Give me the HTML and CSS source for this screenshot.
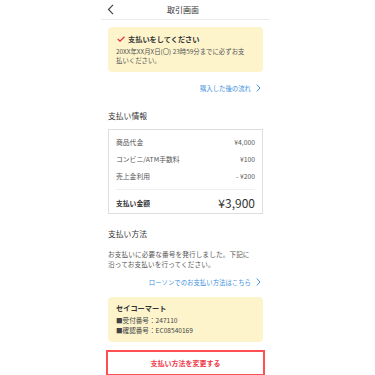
FILE: index.html
```html
<!DOCTYPE html>
<html lang="ja">
<head>
<meta charset="UTF-8">
<title>取引画面</title>
<link rel="stylesheet" href="styles.css">
</head>
<body>
<div class="screen">
	<!-- ヘッダー -->
	<div class="header">
		<span class="back">
			<svg width="7" height="11" viewBox="0 0 7 11"><path d="M6 0.8 L1.5 5.5 L6 10.2" fill="none" stroke="#444" stroke-width="1.2"/></svg>
		</span>
		<span class="title">取引画面</span>
	</div>

	<div class="content">
		<div class="notice">
			<div class="notice-title">
				<svg width="8" height="6" viewBox="0 0 8 6"><path d="M0.7 3 L3 5.2 L7.4 0.7" fill="none" stroke="#e8344a" stroke-width="1.3"/></svg>
				支払いをしてください
			</div>
			<p class="notice-text">20XX年XX月X日(〇) 23時59分までに必ずお支払いください。</p>
		</div>

		<a href="#" class="more first">購入した後の流れ
			<svg width="5" height="8" viewBox="0 0 5 8"><path d="M0.8 0.6 L4 4 L0.8 7.4" fill="none" stroke="#3d8fdc" stroke-width="1"/></svg>
		</a>

		<h2 class="heading">支払い情報</h2>
		<div class="bill">
			<div class="row"><span>商品代金</span><span>¥4,000</span></div>
			<div class="row"><span>コンビニ/ATM手数料</span><span>¥100</span></div>
			<div class="row"><span>売上金利用</span><span>- ¥200</span></div>
			<div class="row total"><span>支払い金額</span><span class="sum">¥3,900</span></div>
		</div>

		<h2 class="heading method">支払い方法</h2>
		<p class="desc">お支払いに必要な番号を発行しました。下記に沿ってお支払いを行ってください。</p>

		<a href="#" class="more">ローソンでのお支払い方法はこちら
			<svg width="5" height="8" viewBox="0 0 5 8"><path d="M0.8 0.6 L4 4 L0.8 7.4" fill="none" stroke="#3d8fdc" stroke-width="1"/></svg>
		</a>

		<div class="store">
			<div class="store-name">セイコーマート</div>
			<div class="store-line">■受付番号：247110</div>
			<div class="store-line">■確認番号：EC08540169</div>
		</div>

		<a href="#" class="change">支払い方法を変更する</a>
	</div>
</div>
</body>
</html>
```

FILE: styles.css
```css
*{
	padding: 0;
	margin: 0;
	box-sizing: border-box;
}
a{
	text-decoration: none;
}
body{
	background-color: #FFFFFF;
	font-family: "Noto Sans CJK JP", "Noto Sans", sans-serif;
	color: #444;
	height: 375px;
	overflow: hidden;
}
.screen{
	width: 169px;
	margin-left: 101px;
}

/* ヘッダー */
.header{
	height: 20px;
	border-bottom: 1px solid #ebebeb;
	display: flex;
	align-items: center;
	justify-content: center;
	position: relative;
}
.header .back{
	position: absolute;
	left: 6px;
	top: 4px;
	display: flex;
}
.header .title{
	font-size: 8px;
	color: #333;
	margin-right: 5px;
	line-height: 10px;
}

.content{
	padding: 7px 7px 0;
}

/* お知らせ */
.notice{
	background-color: #fdf4cc;
	border-radius: 4px;
	padding: 6px 8px 7px 8px;
	height: 45px;
}
.notice-title{
	font-size: 7.2px;
	font-weight: bold;
	color: #333;
	display: flex;
	align-items: center;
	gap: 3px;
	height: 11px;
}
.notice-title svg{
	margin-left: 1px;
}
.notice-text{
	font-size: 6.4px;
	line-height: 9px;
	color: #555;
	margin-top: 3px;
	padding-right: 7px;
}

/* リンク */
.more{
	display: flex;
	justify-content: flex-end;
	align-items: center;
	gap: 5px;
	font-size: 6.4px;
	color: #3d8fdc;
	height: 10px;
	padding-right: 2px;
}
.more.first{
	margin-top: 11px;
}

.heading{
	font-size: 7.8px;
	font-weight: normal;
	color: #333;
	margin-top: 18px;
	height: 10px;
	line-height: 10px;
}
.heading.method{
	margin-top: 15px;
}

/* 支払い情報 */
.bill{
	margin-top: 8px;
	border: 1px solid #dedede;
	padding: 3px 7px 0;
	height: 85px;
}
.bill .row{
	display: flex;
	justify-content: space-between;
	align-items: center;
	font-size: 6.8px;
	color: #555;
	height: 17px;
}
.bill .row.total{
	border-top: 1px solid #eeeeee;
	margin-top: 5px;
	height: 26px;
	font-weight: bold;
	color: #333;
}
.bill .sum{
	font-size: 12px;
	font-weight: normal;
	color: #333;
}

.desc{
	font-size: 6.6px;
	line-height: 10px;
	color: #555;
	margin-top: 10px;
	padding-right: 9px;
	letter-spacing: 0.15px;
}
.desc + .more{
	margin-top: 8px;
}

/* 店舗 */
.store{
	margin-top: 10px;
	background-color: #fdf4cc;
	border-radius: 4px;
	padding: 6px 8px;
	height: 45px;
}
.store-name{
	font-size: 7.2px;
	font-weight: bold;
	color: #333;
	height: 13px;
	line-height: 11px;
}
.store-line{
	font-size: 6.6px;
	color: #444;
	line-height: 9.5px;
}

/* ボタン */
.change{
	display: flex;
	align-items: center;
	justify-content: center;
	margin: 8px -2px 0 -2px;
	height: 26px;
	border: 2.5px solid #ff4f55;
	color: #ee3a4a;
	font-size: 7px;
	font-weight: bold;
}
```
